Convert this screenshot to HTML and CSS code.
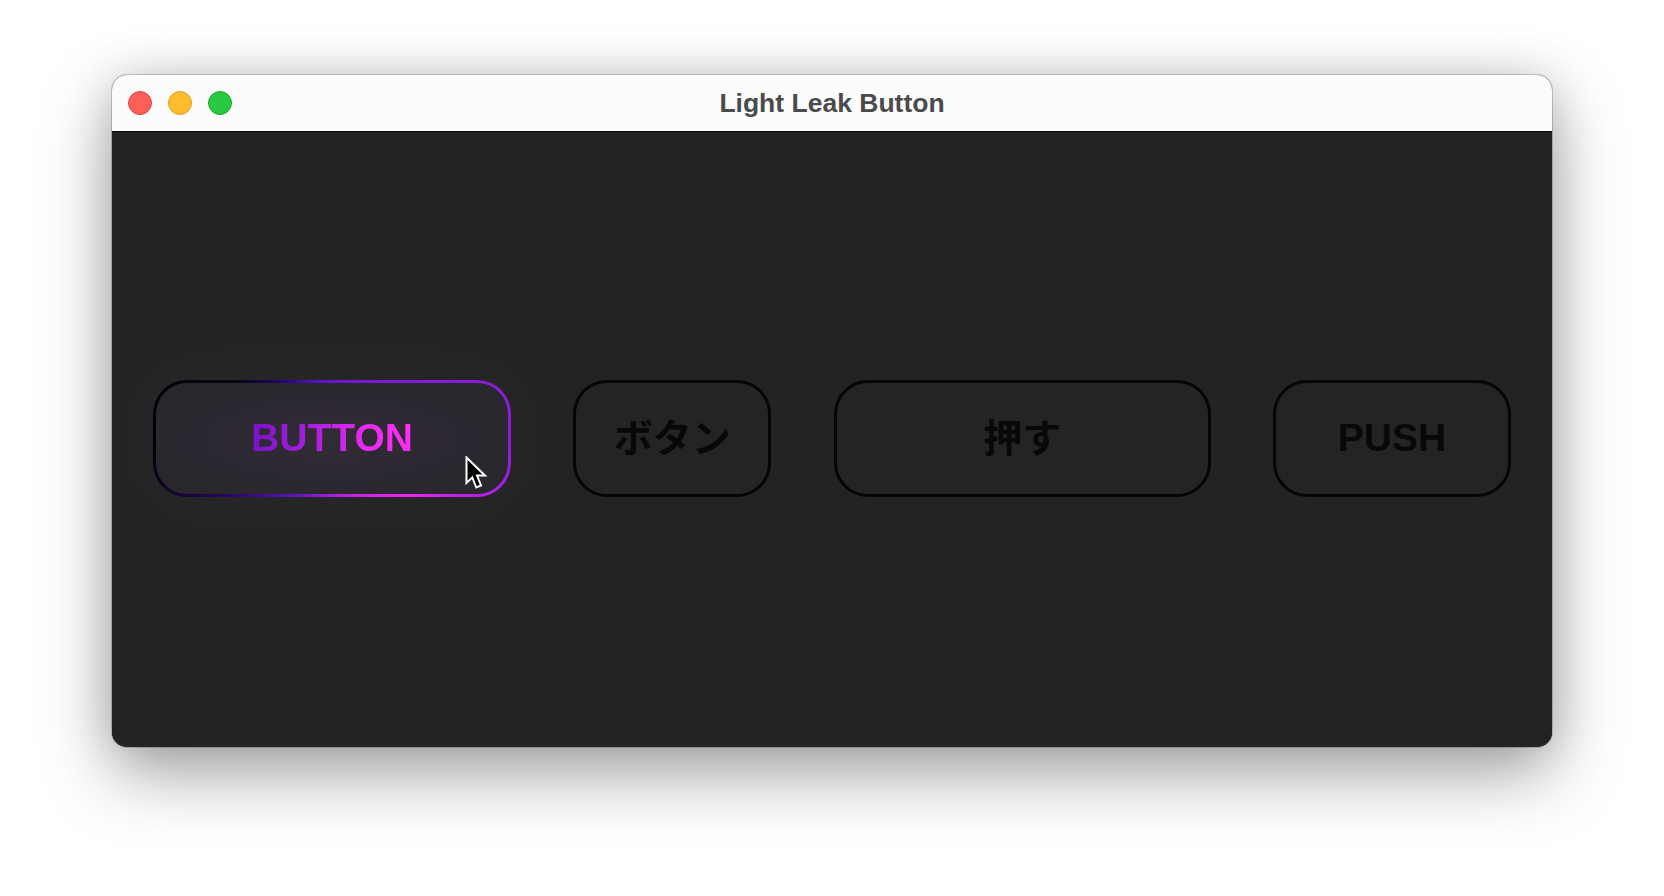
FILE: index.html
```html
<!DOCTYPE html>
<html lang="ja">
<head>
<meta charset="utf-8">
<title>Light Leak Button</title>
<link rel="stylesheet" href="styles.css">
</head>
<body>
<div class="window">
  <div class="titlebar">
    <div class="lights">
      <span class="light light-red"></span>
      <span class="light light-yellow"></span>
      <span class="light light-green"></span>
    </div>
    <div class="title">Light Leak Button</div>
  </div>
  <div class="content">
    <button class="btn btn-active btn-w1"><span class="leak-text">BUTTON</span></button>
    <button class="btn btn-ja btn-w2">ボタン</button>
    <button class="btn btn-ja btn-w3">押す</button>
    <button class="btn btn-w4">PUSH</button>
    <svg class="cursor" width="24" height="37" viewBox="0 0 24 37">
      <path d="M1.5 1.5 V27 L7.3 21.4 L11.3 31.5 L16 29.5 L12 19.6 H20 Z" fill="#000" stroke="#fff" stroke-width="2" stroke-linejoin="miter"/>
    </svg>
  </div>
</div>
</body>
</html>
```
FILE: styles.css
```css
html, body {
  margin: 0;
  padding: 0;
}
body {
  width: 1664px;
  height: 896px;
  background: #ffffff;
  font-family: "Liberation Sans", "Noto Sans CJK JP", sans-serif;
  padding-top: 75px;
  box-sizing: border-box;
  overflow: hidden;
}
.window {
  width: 1440px;
  height: 672px;
  margin: 0 auto;
  border-radius: 15px;
  overflow: hidden;
  display: flex;
  flex-direction: column;
  box-shadow: 0 0 0 1px rgba(0,0,0,0.18), 0 26px 70px rgba(0,0,0,0.36), 0 0 45px rgba(0,0,0,0.12);
  background: #232323;
}
.titlebar {
  position: relative;
  height: 56px;
  flex: 0 0 56px;
  background: #fcfcfc;
  border-bottom: 1px solid #0d0d0d;
  display: flex;
  align-items: center;
  justify-content: center;
}
.lights {
  position: absolute;
  left: 16px;
  top: 16px;
  display: flex;
  gap: 16px;
}
.light {
  width: 24px;
  height: 24px;
  border-radius: 50%;
  box-sizing: border-box;
}
.light-red { background: #ff5f57; border: 1px solid #e2463f; }
.light-yellow { background: #febc2e; border: 1px solid #e1a116; }
.light-green { background: #28c840; border: 1px solid #1aab29; }
.title {
  font-size: 26.5px;
  font-weight: 700;
  color: #4b4b4b;
  margin-top: 1px;
}
.content {
  position: relative;
  flex: 1;
  display: flex;
  align-items: center;
  justify-content: space-between;
  padding: 0 41px;
  background: #232323;
}
.btn {
  height: 117px;
  border-radius: 34px;
  border: 3px solid #050505;
  background: #242424;
  color: #080808;
  font-family: "Liberation Sans", "Noto Sans CJK JP", sans-serif;
  font-size: 39px;
  font-weight: 700;
  padding: 0;
  box-sizing: border-box;
  display: flex;
  align-items: center;
  justify-content: center;
  margin-top: -3px;
}
.btn-ja {
  padding-bottom: 7px;
  font-size: 39px;
}
.btn-w1 { width: 358px; }
.btn-w2 { width: 198px; }
.btn-w3 { width: 377px; }
.btn-w4 { width: 238px; }
.btn-active {
  border: 3px solid transparent;
  background:
    radial-gradient(ellipse at 50% 50%, #312c37 0%, #2c2831 50%, #28262c 100%) padding-box,
    conic-gradient(from 0deg,
      #6a16c4 0deg,
      #861cd4 60deg,
      #8e1ed8 95deg,
      #b422e6 112deg,
      #ee26f2 125deg,
      #d022ec 150deg,
      #9a1edc 185deg,
      #4a10a8 225deg,
      #140530 250deg,
      #000000 270deg,
      #05020e 300deg,
      #2a0a80 322deg,
      #5814bc 345deg,
      #6a16c4 360deg) border-box;
  box-shadow: 0 0 75px 6px rgba(48, 44, 56, 0.5);
}
.leak-text {
  background: linear-gradient(90deg, #7a12c8 0%, #b020e0 40%, #e82af0 70%, #ff2df4 100%);
  -webkit-background-clip: text;
  background-clip: text;
  color: transparent;
}
.cursor {
  position: absolute;
  left: 353px;
  top: 324px;
}
```
